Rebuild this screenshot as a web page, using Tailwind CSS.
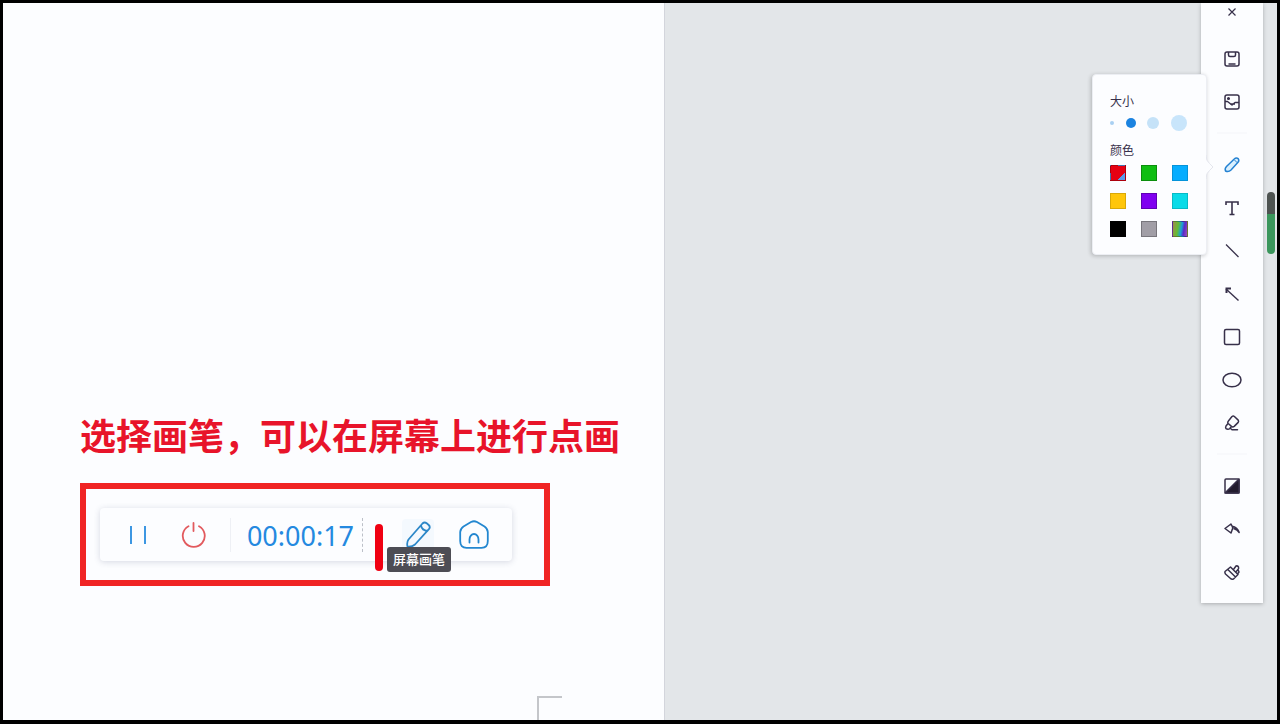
<!DOCTYPE html>
<html lang="zh-CN">

  <head>
    <meta charset="UTF-8">
    <meta name="viewport" content="width=device-width, initial-scale=1.0">
    <script src="https://cdn.jsdelivr.net/npm/@tailwindcss/browser@4"></script>
    <title>屏幕画笔</title>
  </head>

  <body class="bg-black font-['Noto_Sans','Noto_Sans_CJK_SC',sans-serif]">
    <div class="relative flex h-screen overflow-hidden border-[3px] border-b-4 border-black bg-[#e3e6e9]">

      <!-- document page -->
      <main class="flex w-[52%] flex-col border-r border-[#d3d5dc] bg-[#fcfdff] pt-[409px] pl-[77px]">
        <h1 class="font-['Noto_Sans_CJK_SC',sans-serif] text-[36px] leading-[44px] font-bold whitespace-nowrap text-[#e8142a]">选择画笔，可以在屏幕上进行点画</h1>

        <section class="mt-[27px] w-[470px] border-[6px] border-[#f02424] pt-[19px] pb-[19px] pl-[14px]">
          <div class="relative flex h-[53px] w-[412px] items-center rounded-sm bg-[#fcfdff] px-[10px] shadow-[0_1px_6px_rgba(60,70,110,0.2)]">
            <button aria-label="暂停" class="flex h-10 w-14 items-center justify-center text-[#3d97e2]">
              <svg width="24" height="24" viewBox="0 0 24 24" fill="none" stroke="currentColor" stroke-width="2"><path d="M5 3v18M19 3v18"/></svg>
            </button>
            <button aria-label="停止" class="flex h-10 w-14 items-center justify-center text-[#e25a5e]">
              <svg width="26" height="26" viewBox="0 0 26 26" fill="none" stroke="currentColor" stroke-width="1.800" stroke-linecap="round"><path d="M12.500 1v8M7.500 4.200a11 11 0 1 0 10.500 0"/></svg>
            </button>
            <time class="ml-2 flex h-[34px] w-[133px] items-center justify-center border-r border-l border-r-[#bcc0c8] border-l-[#eef0f5] [border-right-style:dashed] pt-0.5 pl-2 text-[27px] leading-8 text-[#2489e0]">00:00:17</time>
            <button aria-label="屏幕画笔" class="ml-[27px] flex h-10 w-14 items-center justify-center text-[#2b87c8]">
              <span class="flex size-8 items-center justify-center rounded bg-[#f4f9fe]">
                <svg width="28" height="28" viewBox="0 0 28 28" fill="none" stroke="currentColor" stroke-width="1.800" stroke-linejoin="round" stroke-linecap="round"><path d="M3.500 25.500q-1-4 1-7L18.500 2.500q2-2 4.200-.2l2 1.700q2 2 .2 4.200L11 23.500q-3 2.500-7.500 2zM17 4.500q1 5 6.500 5.500"/></svg>
              </span>
            </button>
            <button aria-label="主页" class="flex h-10 w-14 items-center justify-center text-[#2387d0]">
              <svg width="32" height="32" viewBox="0 0 32 32" fill="none" stroke="currentColor" stroke-width="1.800" stroke-linejoin="round" stroke-linecap="round"><path d="M13 3Q16 1.500 19 3L26.500 7.500Q29.500 9.500 29.800 13V22Q29.800 28.800 23.500 28.800H8.500Q2.200 28.800 2.200 22V13Q2.500 9.500 5.500 7.500zM11.500 23.500v-3a4.500 5.500 0 0 1 9 0v3"/></svg>
            </button>
            <!-- pen stroke and tooltip -->
            <span class="absolute top-4 left-[275px] h-[47px] w-2 rounded-full bg-[#f00012]"></span>
            <span role="tooltip" class="absolute top-[39px] left-[287px] flex h-[25px] w-16 items-center justify-center rounded-[3px] bg-[#4d4d55] text-[13px] leading-none font-medium whitespace-nowrap text-white">屏幕画笔</span>
          </div>
        </section>

        <div class="mt-auto mr-[102px] h-6 w-[25px] self-end border-t-2 border-l-2 border-[#c4c6ca]"></div>
      </main>

      <!-- drawing tools -->
      <nav class="relative mr-[14px] ml-auto flex w-[62px] flex-col self-start bg-[#fcfdff] pb-[10px] text-[#37304a] shadow-[0_1px_4px_rgba(0,0,0,0.25)]">
        <button aria-label="关闭" class="flex h-[18px] items-center justify-center">
          <svg width="10" height="10" viewBox="0 0 10 10" fill="none" stroke="currentColor" stroke-width="1.200"><path d="M1.500 1.500l7 7M8.500 1.500l-7 7"/></svg>
        </button>

        <div class="mt-4 flex flex-col">
          <button aria-label="保存" class="flex h-[43px] items-center justify-center">
            <svg width="18" height="18" viewBox="0 0 18 18" fill="none" stroke="currentColor" stroke-width="1.500" stroke-linejoin="round"><rect x="2" y="2" width="14" height="14" rx="2"/><path d="M5.500 2v3q0 1.500 1.500 1.500h4q1.500 0 1.500-1.500V2M5.500 14h7"/></svg>
          </button>
          <button aria-label="图片" class="flex h-[43px] items-center justify-center">
            <svg width="18" height="18" viewBox="0 0 18 18" fill="none" stroke="currentColor" stroke-width="1.500" stroke-linejoin="round"><rect x="2" y="2" width="14" height="14" rx="2"/><path d="M2 8.500h2.500L9 12l3-2.500h4M7 11h5"/><circle cx="5.500" cy="5.500" r=".8"/></svg>
          </button>
        </div>

        <hr class="mx-4 my-[9px] border-t-2 border-[#f8f9fc]">

        <div class="flex flex-col">
          <button aria-label="画笔" class="flex h-[43px] items-center justify-center text-[#2582d2]">
            <svg width="18" height="18" viewBox="0 0 18 18" fill="#d9f0ff" stroke="currentColor" stroke-width="1.500" stroke-linejoin="round"><path d="M2.500 15Q1.500 12.500 3.500 10.500L11 3.200q2.200-2 4.200-.6 1.400 2-.4 4L8 14q-2.500 2.500-5.500 1z"/><path d="M11.500 4l2.800 2.800" stroke-width="1"/></svg>
          </button>
          <button aria-label="文字" class="flex h-[43px] items-center justify-center">
            <svg width="18" height="18" viewBox="0 0 18 18" fill="none" stroke="currentColor" stroke-width="1.600"><path d="M3 6V3h12v3M9 3v12.500M6.500 15.500h5"/></svg>
          </button>
          <button aria-label="直线" class="flex h-[43px] items-center justify-center">
            <svg width="18" height="18" viewBox="0 0 18 18" fill="none" stroke="currentColor" stroke-width="1.300"><path d="M3 2.500l12.500 12.500"/></svg>
          </button>
          <button aria-label="箭头" class="flex h-[43px] items-center justify-center">
            <svg width="18" height="18" viewBox="0 0 18 18" fill="none" stroke="currentColor" stroke-width="1.400"><path d="M3 4l12.500 11.500"/><path d="M3.500 8V3.500H8" stroke-width="2"/></svg>
          </button>
          <button aria-label="矩形" class="flex h-[43px] items-center justify-center">
            <svg width="18" height="18" viewBox="0 0 18 18" fill="none" stroke="currentColor" stroke-width="1.500"><rect x="1.500" y="1.500" width="15" height="15" rx="1.500"/></svg>
          </button>
          <button aria-label="椭圆" class="flex h-[43px] items-center justify-center">
            <svg width="20" height="18" viewBox="0 0 20 18" fill="none" stroke="currentColor" stroke-width="1.500"><ellipse cx="10" cy="9" rx="9" ry="6.800"/></svg>
          </button>
          <button aria-label="橡皮擦" class="flex h-[43px] items-center justify-center">
            <svg width="18" height="18" viewBox="0 0 18 18" fill="none" stroke="currentColor" stroke-width="1.500" stroke-linejoin="round" stroke-linecap="round"><path d="M9 2.500q1.200-1 2.400 0l3.800 3.600q.8 1.200 0 2.300l-4 4q-1.500 1-2.700 0L5.200 9.500q-1-1.200 0-2.300zM5 9.500l-2 2.500q-.8 1.500 0 2.700 2 1.300 4-.2l1.500-2.100M7 14l2 1.700h5.500"/></svg>
          </button>
        </div>

        <hr class="mx-4 my-[9px] border-t-2 border-[#f8f9fc]">

        <div class="flex flex-col">
          <button aria-label="黑白板" class="flex h-[43px] items-center justify-center">
            <svg width="18" height="18" viewBox="0 0 18 18" fill="none" stroke="currentColor" stroke-width="1.500" stroke-linejoin="round"><rect x="2" y="2" width="14" height="14" rx="1"/><path d="M16 2v14H2z" fill="#221c2e"/></svg>
          </button>
          <button aria-label="撤销" class="flex h-[43px] items-center justify-center">
            <svg width="18" height="18" viewBox="0 0 18 18" fill="none" stroke="currentColor" stroke-width="1.500" stroke-linejoin="round" stroke-linecap="round"><path d="M8 4L2 8.500 8 13l1-2.800q1.500-2.500 0-4.200zM9 6.200q5.500 1 7.200 6.300-2-3-5-3.700"/></svg>
          </button>
          <button aria-label="清空" class="flex h-[43px] items-center justify-center">
            <svg width="18" height="18" viewBox="0 0 18 18" fill="none" stroke="currentColor" stroke-width="1.500" stroke-linejoin="round" stroke-linecap="round"><path d="M2 8.500L7.500 4l7.500 7.500-4.500 4.500q-2 .5-3-.5L2.500 11q-1-1.500-.5-2.500zM4.800 6.500l7.700 7.500M10.500 6.500l2.500-3.500q2-.5 2.500 1t-.5 2.500L12.800 9M15 6.500l1 2.500-1.500 2"/></svg>
          </button>
        </div>

        <!-- brush options, opens to the left of the pen tool -->
        <section class="absolute top-[71px] right-[56px] h-[181px] w-[115px] rounded border border-[#eceef3] bg-[#fcfdff] pt-[17px] pl-[17px] shadow-[-1px_1px_4px_rgba(0,0,0,0.22)]">
          <h2 class="text-[12px] leading-5">大小</h2>
          <div class="flex h-[22px] items-center">
            <input type="radio" name="size" aria-label="极细" class="size-1 appearance-none rounded-full bg-[#a9d0f2]">
            <input type="radio" name="size" aria-label="细" checked class="ml-3 size-[10px] appearance-none rounded-full bg-[#1b83e0]">
            <input type="radio" name="size" aria-label="中" class="ml-[11px] size-3 appearance-none rounded-full bg-[#c5e2f8]">
            <input type="radio" name="size" aria-label="粗" class="ml-3 size-4 appearance-none rounded-full bg-[#c8e5fb]">
          </div>
          <h2 class="mt-[7px] text-[12px] leading-5">颜色</h2>
          <div class="mt-1 grid w-[78px] grid-cols-3 justify-between gap-x-[15px] gap-y-3">
            <input type="radio" name="color" aria-label="红" checked class="size-4 appearance-none border border-black/25 bg-[linear-gradient(135deg,#e60012_74%,#5a9bea_74%)]">
            <input type="radio" name="color" aria-label="绿" class="size-4 appearance-none border border-black/25 bg-[#0fbe12]">
            <input type="radio" name="color" aria-label="蓝" class="size-4 appearance-none border border-black/15 bg-[#06adff]">
            <input type="radio" name="color" aria-label="黄" class="size-4 appearance-none border border-black/15 bg-[#ffc60a]">
            <input type="radio" name="color" aria-label="紫" class="size-4 appearance-none border border-black/25 bg-[#8000f0]">
            <input type="radio" name="color" aria-label="青" class="size-4 appearance-none border border-black/15 bg-[#0adbe8]">
            <input type="radio" name="color" aria-label="黑" class="size-4 appearance-none bg-black">
            <input type="radio" name="color" aria-label="灰" class="size-4 appearance-none border border-black/25 bg-[#a19ea6]">
            <input type="radio" name="color" aria-label="自定义" class="size-4 appearance-none border border-black/25 bg-[linear-gradient(100deg,#a08a50,#66bb33_35%,#18a0d8_58%,#5a28c8_75%,#a050b8)]">
          </div>
          <svg class="absolute top-[80px] -right-2" width="9" height="24" viewBox="0 0 9 24" fill="#fcfdff" stroke="#e4e6ed" stroke-width="1"><path d="M1 0q0 6 3.500 8.500L8 12l-3.500 3.500Q1 18 1 24"/><path d="M0 0h1v24H0z" stroke="none"/></svg>
        </section>
      </nav>

      <!-- scroll level -->
      <div class="absolute top-[189px] right-[2px] h-[62px] w-2 rounded-full bg-linear-to-b from-[#4e5351] from-36% to-[#3b965c] to-36%"></div>
    </div>
  </body>
</html>
